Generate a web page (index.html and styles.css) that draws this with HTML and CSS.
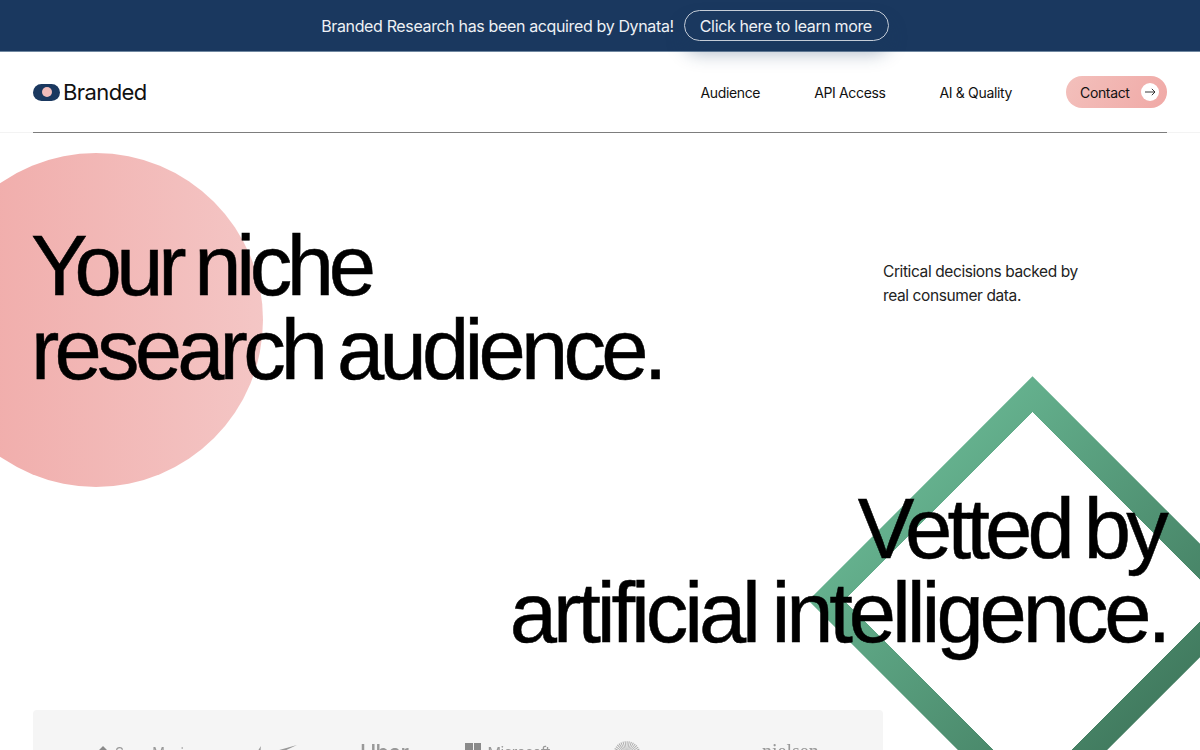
FILE: index.html
```html
<!DOCTYPE html>
<html lang="en">
<head>
    <meta charset="UTF-8">
    <meta name="viewport" content="width=device-width, initial-scale=1.0">
    <title>Branded</title>
    <link rel="stylesheet" href="styles.css">
</head>
<body>
    <!-- Announcement -->
    <div class="announce">
        <span>Branded Research has been acquired by Dynata!</span>
        <a class="announce-btn" href="#">Click here to learn more</a>
    </div>

    <!-- Navigation -->
    <header class="nav">
        <div class="nav-inner">
            <a class="logo" href="#">
                <span class="logo-mark"><span class="logo-dot"></span></span>
                <span class="logo-text">Branded</span>
            </a>
            <nav class="nav-links">
                <a href="#">Audience</a>
                <a href="#">API Access</a>
                <a href="#">AI &amp; Quality</a>
                <a class="contact" href="#">Contact
                    <span class="contact-arrow">
                        <svg width="12" height="10" viewBox="0 0 12 10" fill="none" stroke="#222" stroke-width="0.9"><path d="M1 5H11M7.8 1.8L11 5L7.8 8.2"/></svg>
                    </span>
                </a>
            </nav>
        </div>
    </header>

    <!-- Hero -->
    <main class="hero">
        <div class="circle"></div>
        <div class="diamond"></div>

        <div class="hero-top">
            <h1>Your niche<br>research audience.</h1>
            <p class="hero-note">Critical decisions backed by<br>real consumer data.</p>
        </div>
        <h2><span class="h2-first">Vetted by</span>artificial intelligence.</h2>

        <div class="logos">
            <div class="brand brand-sony">
                <svg width="14" height="14" viewBox="0 0 14 14" fill="#8a8a8a"><path d="M7 0L13 6V14H1V6Z"/></svg>
                <span>Sony Music</span>
            </div>
            <div class="brand brand-nike">
                <svg width="42" height="20" viewBox="0 0 42 20" fill="#999"><path d="M42 0L12 14C7 16 2 16 1 13C0 11 3 5 6 1C5 6 6 10 10 9Z"/></svg>
            </div>
            <div class="brand brand-uber">Uber</div>
            <div class="brand brand-ms">
                <span class="ms-grid"><i></i><i></i><i></i><i></i></span>
                <span class="ms-text">Microsoft</span>
            </div>
            <div class="brand brand-danaher">
                <svg width="34" height="34" viewBox="0 0 34 34" fill="none" stroke="#aaa"><circle cx="17" cy="17" r="9" stroke-width="16" stroke-dasharray="0.7 0.7"/></svg>
                <span>danaher</span>
            </div>
            <div class="brand brand-nielsen">nielsen</div>
        </div>
    </main>
</body>
</html>
```

FILE: styles.css
```css
/* Global Styles */
* {
    margin: 0;
    padding: 0;
    box-sizing: border-box;
}

html,
body {
    height: 750px;
    overflow: hidden;
}

body {
    font-family: 'Inter', sans-serif;
    background-color: #fff;
    color: #111;
}

a {
    color: inherit;
    text-decoration: none;
}

/* Announcement */
.announce {
    height: 52px;
    padding-left: 10px;
    background-color: #1a385f;
    border-bottom: 1px solid #6f87a0;
    color: #eef1f5;
    font-size: 16px;
    letter-spacing: -0.36px;
    display: flex;
    align-items: center;
    justify-content: center;
    gap: 10px;
    position: relative;
    z-index: 2;
}

.announce-btn {
    width: 205px;
    height: 31px;
    padding: 0 15px;
    display: flex;
    align-items: center;
    border: 1px solid #c4ccd7;
    border-radius: 16px;
    box-shadow: 0 12px 18px rgba(26, 56, 95, 0.35);
}

/* Navigation */
.nav {
    height: 81px;
    padding: 0 33px;
    border-bottom: 1px solid #f3f3f3;
}

.nav-inner {
    height: 81px;
    border-bottom: 1px solid #7d7d7d;
    display: flex;
    align-items: center;
    justify-content: space-between;
}

.logo {
    display: flex;
    align-items: center;
    gap: 3px;
}

.logo-mark {
    width: 27px;
    height: 17px;
    border-radius: 9px;
    background-color: #1a385f;
    display: flex;
    align-items: center;
    justify-content: center;
}

.logo-dot {
    width: 10px;
    height: 10px;
    border-radius: 50%;
    background-color: #f2bdbb;
}

.logo-text {
    font-size: 22px;
    letter-spacing: -0.6px;
}

.nav-links {
    display: flex;
    align-items: center;
    gap: 54px;
    font-size: 14px;
    letter-spacing: -0.35px;
}

.contact {
    width: 101px;
    height: 32px;
    padding: 0 8px 0 14px;
    display: flex;
    align-items: center;
    justify-content: space-between;
    border-radius: 16px;
    background: linear-gradient(120deg, #f3c0bc, #f0a9a6);
}

.contact-arrow {
    width: 18px;
    height: 18px;
    border-radius: 50%;
    background-color: #fff;
    display: flex;
    align-items: center;
    justify-content: center;
}

/* Hero */
.hero {
    position: relative;
    padding: 0 33px;
}

.circle {
    position: absolute;
    left: -71px;
    top: 20px;
    width: 334px;
    height: 334px;
    border-radius: 50%;
    background: linear-gradient(90deg, #f0a8a6, #f4c6c5);
}

.diamond {
    position: absolute;
    left: 874px;
    top: 309px;
    width: 317px;
    height: 317px;
    border: 25px solid transparent;
    background: linear-gradient(#fff, #fff) padding-box,
        linear-gradient(90deg, #64b08d, #427c60) border-box;
    transform: rotate(45deg);
}

.hero-top {
    position: relative;
    display: flex;
    justify-content: space-between;
    padding-top: 91px;
}

h1,
h2 {
    font-family: 'Liberation Sans', Arial, sans-serif;
    font-weight: 400;
    font-size: 85px;
    line-height: 83.5px;
    word-spacing: -5px;
    white-space: nowrap;
    color: #000;
    -webkit-text-stroke: 0.5px #000;
}

h1 {
    margin-left: -2px;
    letter-spacing: -4.8px;
}

h1::first-line {
    letter-spacing: -5.4px;
}

.hero-note {
    flex-shrink: 0;
    width: 284px;
    padding-top: 36px;
    font-size: 15.5px;
    letter-spacing: -0.4px;
    line-height: 24px;
    color: #222;
}

h2 {
    position: relative;
    margin-top: 96px;
    text-align: right;
    letter-spacing: -4.1px;
}

.h2-first {
    display: block;
    margin-right: 3px;
    letter-spacing: -4.8px;
}

/* Client logos */
.logos {
    position: relative;
    width: 850px;
    height: 110px;
    margin-top: 56px;
    padding: 28px 0 0 64px;
    background-color: #f5f5f5;
    border-radius: 4px;
    display: flex;
    gap: 63px;
    color: #999;
}

.brand {
    flex-shrink: 0;
    height: 34px;
    display: flex;
    align-items: center;
    gap: 6px;
    font-size: 14px;
    white-space: nowrap;
    filter: blur(0.4px);
}

.brand-sony {
    width: 95px;
    height: 28px;
}

.brand-nike {
    width: 42px;
}

.brand-uber {
    width: 42px;
    height: 28px;
    font-size: 22px;
    font-weight: 500;
    letter-spacing: -0.8px;
}

.brand-ms {
    width: 85px;
    align-items: flex-start;
    font-size: 15px;
    letter-spacing: -0.5px;
}

.ms-grid {
    width: 18px;
    height: 18px;
    margin-top: 5px;
    display: grid;
    grid-template-columns: 1fr 1fr;
    grid-auto-rows: 8px;
    gap: 1px;
}

.ms-grid i {
    background-color: #8a8a8a;
}

.ms-text {
    margin-top: 5px;
}

.brand-danaher {
    width: 86px;
    gap: 4px;
}

.brand-nielsen {
    height: 26px;
    font-family: 'Liberation Serif', serif;
    font-size: 20px;
}
```
